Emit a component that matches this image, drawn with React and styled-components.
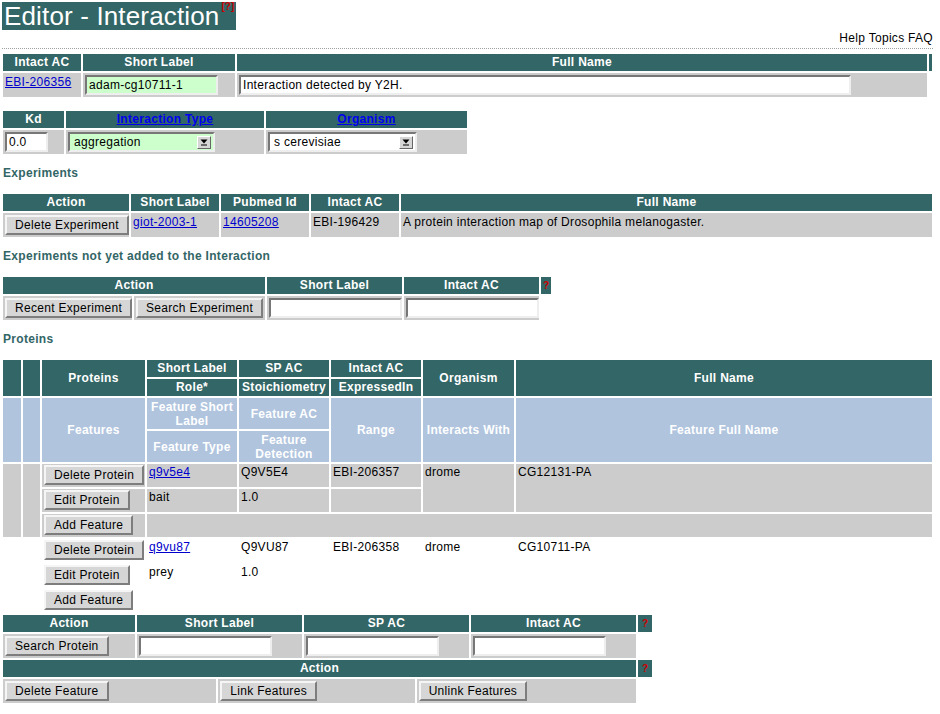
import React from "react";
import styled, { createGlobalStyle } from "styled-components";

const TEAL = "#336666";
const GREY = "#cccccc";
const BLUE = "#b0c4de";

const GlobalStyle = createGlobalStyle`
  html, body {
    margin: 0;
    padding: 0;
    background: #ffffff;
  }
  body {
    font-family: "Liberation Sans", Arial, Helvetica, sans-serif;
    font-size: 12px;
    letter-spacing: 0.3px;
    color: #000000;
  }
  * {
    box-sizing: border-box;
  }
`;

const Page = styled.div`
  width: 940px;
  padding: 2px 0 0 1px;
`;

const TitleBar = styled.h1`
  display: block;
  width: 234px;
  height: 28px;
  margin: 0 0 0 1px;
  padding-left: 2px;
  background: ${TEAL};
  color: #ffffff;
  font-size: 26px;
  font-weight: normal;
  letter-spacing: 0.15px;
  line-height: 28px;
  white-space: nowrap;
`;

const TitleHelp = styled.span`
  display: inline-block;
  vertical-align: top;
  margin-left: 2px;
  color: #cc0000;
  font-size: 10px;
  font-weight: bold;
  letter-spacing: 0;
  line-height: 10px;
`;

const HelpLinks = styled.div`
  height: 16px;
  padding-right: 7px;
  text-align: right;
  line-height: 16px;
`;

const Rule = styled.hr`
  width: 931px;
  height: 0;
  margin: 2px 0 0 1px;
  border: 0;
  border-top: 1px dotted #a0a0a0;
`;

const Grid = styled.table`
  border-collapse: separate;
  border-spacing: 2px;
  table-layout: fixed;
  width: ${(p) => p.$w}px;
  margin-top: ${(p) => p.$mt || 0}px;
`;

const Col = styled.col`
  width: ${(p) => p.$w}px;
`;

const Head = styled.th`
  height: 17px;
  padding: 1px 2px;
  background: ${TEAL};
  color: #ffffff;
  font-weight: bold;
  line-height: 15px;
  text-align: center;
  vertical-align: middle;
  white-space: nowrap;
`;

const HelpMark = styled.th`
  padding: 0;
  background: ${TEAL};
  color: #cc0000;
  font-size: 10px;
  font-weight: bold;
  letter-spacing: 0;
  line-height: 15px;
  text-align: center;
`;

const SubHead = styled.th`
  height: ${(p) => (p.$h ? p.$h + "px" : "auto")};
  padding: 1px 2px;
  background: ${BLUE};
  color: #ffffff;
  font-weight: bold;
  line-height: 14px;
  text-align: center;
  vertical-align: middle;
`;

const Cell = styled.td`
  padding: ${(p) => (p.$tight ? "1px 2px 2px" : "2px")};
  background: ${(p) => (p.$plain ? "transparent" : GREY)};
  line-height: 14px;
  vertical-align: top;
  white-space: nowrap;
  overflow: hidden;
`;

const SectionTitle = styled.h3`
  margin: 10px 0 12px 2px;
  color: ${TEAL};
  font-size: 12px;
  font-weight: bold;
  line-height: 14px;
`;

const Link = styled.a`
  color: #0000cc;
  text-decoration: underline;
`;

const HeadLink = styled.a`
  color: #0000ee;
  text-decoration: underline;
`;

const TextBox = styled.input`
  width: ${(p) => p.$w}px;
  height: 20px;
  margin: 0;
  padding: 0 2px;
  border: 2px solid;
  border-color: #777777 #eeeeee #eeeeee #777777;
  background: ${(p) => p.$bg || "#ffffff"};
  font: inherit;
  letter-spacing: inherit;
  color: #000000;
  vertical-align: top;
`;

const Btn = styled.button`
  height: 20px;
  margin: 0;
  padding: 0 8px;
  border: 2px solid;
  border-color: #f5f5f5 #7d7d7d #7d7d7d #f5f5f5;
  background: #d6d6d6;
  font: inherit;
  letter-spacing: inherit;
  line-height: 16px;
  color: #000000;
  vertical-align: top;
`;

const SelectBox = styled.div`
  display: flex;
  align-items: center;
  justify-content: space-between;
  width: ${(p) => p.$w}px;
  height: 20px;
  padding: 0 2px 0 4px;
  border: 2px solid;
  border-color: #777777 #eeeeee #eeeeee #777777;
  background: ${(p) => p.$bg || "#ffffff"};
`;

const ArrowButton = styled.span`
  display: flex;
  align-items: center;
  justify-content: center;
  width: 14px;
  height: 13px;
  border: 1px solid;
  border-color: #ffffff #666666 #666666 #ffffff;
  background: #d6d6d6;
`;

const Select = ({ w, bg, value }) => (
  <SelectBox $w={w} $bg={bg}>
    <span>{value}</span>
    <ArrowButton>
      <svg width="8" height="7" viewBox="0 0 8 7">
        <path d="M0.5 0.5 L7.5 0.5 L4 4.5 Z" fill="#000" />
        <rect x="1" y="5.5" width="6" height="1" fill="#000" />
      </svg>
    </ArrowButton>
  </SelectBox>
);

const proteins = [
  {
    label: "q9v5e4",
    sp: "Q9V5E4",
    ac: "EBI-206357",
    organism: "drome",
    fullName: "CG12131-PA",
    role: "bait",
    stoich: "1.0",
    plain: false,
  },
  {
    label: "q9vu87",
    sp: "Q9VU87",
    ac: "EBI-206358",
    organism: "drome",
    fullName: "CG10711-PA",
    role: "prey",
    stoich: "1.0",
    plain: true,
  },
];

const ProteinRows = ({ p }) => (
  <>
    <tr>
      <Cell $tight $plain={p.plain} rowSpan={3} />
      <Cell $tight $plain={p.plain} rowSpan={3} />
      <Cell $tight $plain={p.plain}>
        <Btn>Delete Protein</Btn>
      </Cell>
      <Cell $tight $plain={p.plain}>
        <Link href="#">{p.label}</Link>
      </Cell>
      <Cell $tight $plain={p.plain}>{p.sp}</Cell>
      <Cell $tight $plain={p.plain}>{p.ac}</Cell>
      <Cell $tight $plain={p.plain} rowSpan={2}>
        {p.organism}
      </Cell>
      <Cell $tight $plain={p.plain} rowSpan={2}>
        {p.fullName}
      </Cell>
    </tr>
    <tr>
      <Cell $tight $plain={p.plain}>
        <Btn>Edit Protein</Btn>
      </Cell>
      <Cell $tight $plain={p.plain}>{p.role}</Cell>
      <Cell $tight $plain={p.plain}>{p.stoich}</Cell>
      <Cell $tight $plain={p.plain} />
    </tr>
    <tr>
      <Cell $tight $plain={p.plain}>
        <Btn>Add Feature</Btn>
      </Cell>
      <Cell $tight $plain={p.plain} colSpan={5} />
    </tr>
  </>
);

export default function App() {
  return (
    <Page>
      <GlobalStyle />
      <TitleBar>
        Editor - Interaction<TitleHelp>[?]</TitleHelp>
      </TitleBar>
      <HelpLinks>Help Topics FAQ</HelpLinks>
      <Rule />

      <Grid $w={933} $mt={3}>
        <colgroup>
          <Col $w={78} />
          <Col $w={152} />
          <Col $w={690} />
          <Col $w={3} />
        </colgroup>
        <tbody>
          <tr>
            <Head>Intact AC</Head>
            <Head>Short Label</Head>
            <Head>Full Name</Head>
            <HelpMark />
          </tr>
          <tr>
            <Cell>
              <Link href="#">EBI-206356</Link>
            </Cell>
            <Cell>
              <TextBox $w={133} $bg="#ccffcc" defaultValue="adam-cg10711-1" />
            </Cell>
            <Cell>
              <TextBox $w={612} defaultValue="Interaction detected by Y2H." />
            </Cell>
            <Cell $plain />
          </tr>
        </tbody>
      </Grid>

      <Grid $w={468} $mt={10}>
        <colgroup>
          <Col $w={61} />
          <Col $w={198} />
          <Col $w={201} />
        </colgroup>
        <tbody>
          <tr>
            <Head>Kd</Head>
            <Head>
              <HeadLink href="#">Interaction Type</HeadLink>
            </Head>
            <Head>
              <HeadLink href="#">Organism</HeadLink>
            </Head>
          </tr>
          <tr>
            <Cell>
              <TextBox $w={43} defaultValue="0.0" />
            </Cell>
            <Cell>
              <Select w={147} bg="#ccffcc" value="aggregation" />
            </Cell>
            <Cell>
              <Select w={149} value="s cerevisiae" />
            </Cell>
          </tr>
        </tbody>
      </Grid>

      <SectionTitle>Experiments</SectionTitle>
      <Grid $w={933}>
        <colgroup>
          <Col $w={126} />
          <Col $w={88} />
          <Col $w={88} />
          <Col $w={88} />
          <Col $w={531} />
        </colgroup>
        <tbody>
          <tr>
            <Head>Action</Head>
            <Head>Short Label</Head>
            <Head>Pubmed Id</Head>
            <Head>Intact AC</Head>
            <Head>Full Name</Head>
          </tr>
          <tr>
            <Cell>
              <Btn>Delete Experiment</Btn>
            </Cell>
            <Cell>
              <Link href="#">giot-2003-1</Link>
            </Cell>
            <Cell>
              <Link href="#">14605208</Link>
            </Cell>
            <Cell>EBI-196429</Cell>
            <Cell>A protein interaction map of Drosophila melanogaster.</Cell>
          </tr>
        </tbody>
      </Grid>

      <SectionTitle>Experiments not yet added to the Interaction</SectionTitle>
      <Grid $w={552}>
        <colgroup>
          <Col $w={129} />
          <Col $w={131} />
          <Col $w={135} />
          <Col $w={135} />
          <Col $w={10} />
        </colgroup>
        <tbody>
          <tr>
            <Head colSpan={2}>Action</Head>
            <Head>Short Label</Head>
            <Head>Intact AC</Head>
            <HelpMark>?</HelpMark>
          </tr>
          <tr>
            <Cell>
              <Btn>Recent Experiment</Btn>
            </Cell>
            <Cell>
              <Btn>Search Experiment</Btn>
            </Cell>
            <Cell>
              <TextBox $w={133} />
            </Cell>
            <Cell>
              <TextBox $w={133} />
            </Cell>
            <Cell $plain />
          </tr>
        </tbody>
      </Grid>

      <SectionTitle>Proteins</SectionTitle>
      <Grid $w={933}>
        <colgroup>
          <Col $w={18} />
          <Col $w={17} />
          <Col $w={103} />
          <Col $w={90} />
          <Col $w={90} />
          <Col $w={90} />
          <Col $w={91} />
          <Col $w={416} />
        </colgroup>
        <tbody>
          <tr>
            <Head rowSpan={2} />
            <Head rowSpan={2} />
            <Head rowSpan={2}>Proteins</Head>
            <Head>Short Label</Head>
            <Head>SP AC</Head>
            <Head>Intact AC</Head>
            <Head rowSpan={2}>Organism</Head>
            <Head rowSpan={2}>Full Name</Head>
          </tr>
          <tr>
            <Head>Role*</Head>
            <Head>Stoichiometry</Head>
            <Head>ExpressedIn</Head>
          </tr>
          <tr>
            <SubHead rowSpan={2} />
            <SubHead rowSpan={2} />
            <SubHead rowSpan={2}>Features</SubHead>
            <SubHead $h={31}>Feature Short Label</SubHead>
            <SubHead $h={31}>Feature AC</SubHead>
            <SubHead rowSpan={2}>Range</SubHead>
            <SubHead rowSpan={2}>Interacts With</SubHead>
            <SubHead rowSpan={2}>Feature Full Name</SubHead>
          </tr>
          <tr>
            <SubHead $h={31}>Feature Type</SubHead>
            <SubHead $h={31}>Feature Detection</SubHead>
          </tr>
          {proteins.map((p) => (
            <ProteinRows key={p.ac} p={p} />
          ))}
        </tbody>
      </Grid>

      <Grid $w={653} $mt={-1}>
        <colgroup>
          <Col $w={132} />
          <Col $w={165} />
          <Col $w={165} />
          <Col $w={165} />
          <Col $w={14} />
        </colgroup>
        <tbody>
          <tr>
            <Head>Action</Head>
            <Head>Short Label</Head>
            <Head>SP AC</Head>
            <Head>Intact AC</Head>
            <HelpMark>?</HelpMark>
          </tr>
          <tr>
            <Cell>
              <Btn>Search Protein</Btn>
            </Cell>
            <Cell>
              <TextBox $w={133} />
            </Cell>
            <Cell>
              <TextBox $w={133} />
            </Cell>
            <Cell>
              <TextBox $w={133} />
            </Cell>
            <Cell $plain />
          </tr>
        </tbody>
      </Grid>

      <Grid $w={653} $mt={-2}>
        <colgroup>
          <Col $w={213} />
          <Col $w={196} />
          <Col $w={219} />
          <Col $w={14} />
        </colgroup>
        <tbody>
          <tr>
            <Head colSpan={3}>Action</Head>
            <HelpMark>?</HelpMark>
          </tr>
          <tr>
            <Cell>
              <Btn>Delete Feature</Btn>
            </Cell>
            <Cell>
              <Btn>Link Features</Btn>
            </Cell>
            <Cell>
              <Btn>Unlink Features</Btn>
            </Cell>
            <Cell $plain />
          </tr>
        </tbody>
      </Grid>
    </Page>
  );
}
